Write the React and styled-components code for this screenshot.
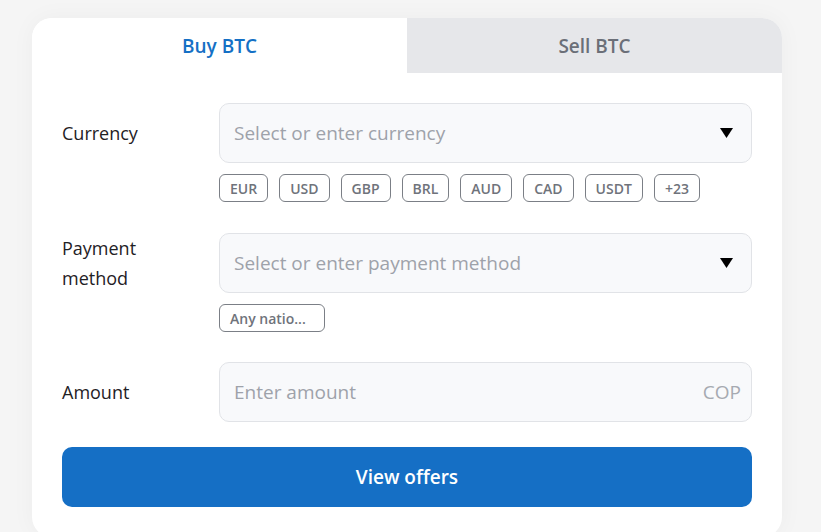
import React from 'react';
import styled, { createGlobalStyle } from 'styled-components';

const GlobalStyle = createGlobalStyle`
	html, body {
		margin: 0;
		padding: 0;
		background: #f5f5f5;
		font-family: 'Open Sans', 'Noto Sans', sans-serif;
	}
`;

const Page = styled.div`
	padding: 18px 39px 0 32px;
	height: 532px;
	box-sizing: border-box;
	overflow: hidden;
`;

const Card = styled.div`
	width: 750px;
	background: #fff;
	border-radius: 20px;
	box-shadow: 0 0 24px rgba(0, 0, 0, 0.04);
	overflow: hidden;
	padding-bottom: 30px;
`;

const Tabs = styled.div`
	display: grid;
	grid-template-columns: 1fr 1fr;
	height: 55px;
`;

const Tab = styled.div`
	display: flex;
	align-items: center;
	justify-content: center;
	font-size: 19px;
	font-weight: 600;
	color: ${({ active }) => (active ? '#1570c5' : '#6b6f78')};
	background: ${({ active }) => (active ? '#fff' : '#e6e7ea')};
`;

const Form = styled.div`
	padding: 30px 30px 0;
	display: flex;
	flex-direction: column;
`;

const Row = styled.div`
	display: grid;
	grid-template-columns: 120px 1fr;
	column-gap: 37px;
	margin-bottom: ${({ mb }) => mb}px;
`;

const Label = styled.div`
	height: 60px;
	display: flex;
	align-items: center;
	font-size: 18px;
	line-height: 30px;
	color: #1f2125;
`;

const Field = styled.div`
	display: flex;
	flex-direction: column;
`;

const Input = styled.div`
	height: 60px;
	box-sizing: border-box;
	border: 1px solid #e1e3e7;
	border-radius: 10px;
	background: #f8f9fb;
	display: flex;
	align-items: center;
	padding: 0 14px;
	font-size: 19px;
	color: #9ea2aa;
`;

const Placeholder = styled.span`
	flex: 1;
`;

const Arrow = styled.svg`
	width: 13px;
	height: 10px;
	margin-right: 4px;
`;

const Suffix = styled.span`
	color: #a6aab1;
	margin-right: -4px;
`;

const Chips = styled.div`
	display: flex;
	gap: 11px;
	margin-top: 11px;
`;

const Chip = styled.div`
	height: 28px;
	box-sizing: border-box;
	width: ${({ w }) => (w ? `${w}px` : 'auto')};
	padding: 0 10px;
	border: 1px solid #7b7f86;
	border-radius: 6px;
	display: flex;
	align-items: center;
	font-size: 14px;
	font-weight: 600;
	color: #6f737b;
	background: #fff;
	white-space: nowrap;
`;

const Button = styled.button`
	margin-top: 25px;
	height: 60px;
	border: none;
	border-radius: 10px;
	background: #156fc5;
	color: #fff;
	font-family: inherit;
	font-size: 19px;
	font-weight: 600;
	cursor: pointer;
`;

const Caret = () => (
	<Arrow viewBox="0 0 13 10">
		<path d="M0 0 H13 L6.5 10 Z" fill="#000" />
	</Arrow>
);

const currencies = ['EUR', 'USD', 'GBP', 'BRL', 'AUD', 'CAD', 'USDT', '+23'];

const App = () => (
	<Page>
		<GlobalStyle />
		<Card>
			<Tabs>
				<Tab active>Buy BTC</Tab>
				<Tab>Sell BTC</Tab>
			</Tabs>
			<Form>
				<Row mb={31}>
					<Label>Currency</Label>
					<Field>
						<Input>
							<Placeholder>Select or enter currency</Placeholder>
							<Caret />
						</Input>
						<Chips>
							{currencies.map((c) => (
								<Chip key={c}>{c}</Chip>
							))}
						</Chips>
					</Field>
				</Row>
				<Row mb={30}>
					<Label>Payment method</Label>
					<Field>
						<Input>
							<Placeholder>Select or enter payment method</Placeholder>
							<Caret />
						</Input>
						<Chips>
							<Chip w={106}>Any natio...</Chip>
						</Chips>
					</Field>
				</Row>
				<Row mb={0}>
					<Label>Amount</Label>
					<Field>
						<Input>
							<Placeholder>Enter amount</Placeholder>
							<Suffix>COP</Suffix>
						</Input>
					</Field>
				</Row>
				<Button>View offers</Button>
			</Form>
		</Card>
	</Page>
);

export default App;
